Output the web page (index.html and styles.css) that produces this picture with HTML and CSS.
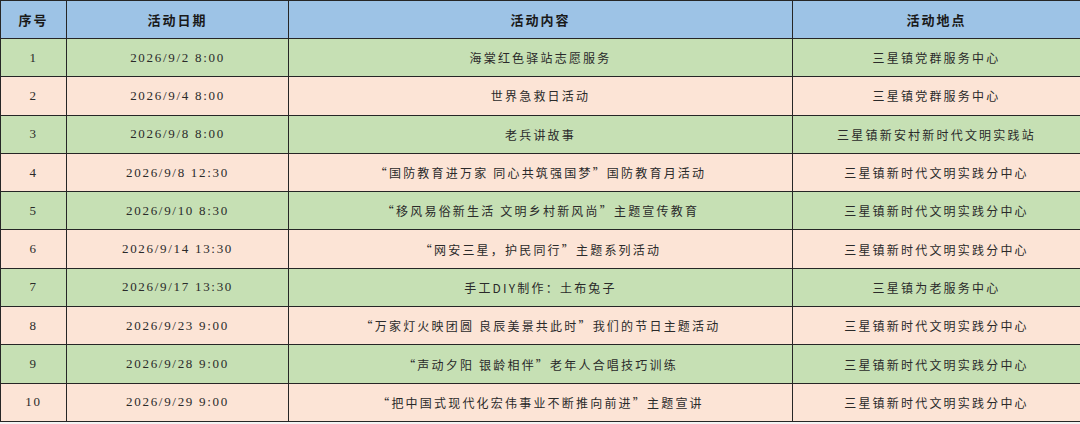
FILE: index.html
```html
<!DOCTYPE html>
<html lang="zh">
<head>
<meta charset="utf-8">
<link rel="stylesheet" href="styles.css">
</head>
<body>
<table class="sched">
  <colgroup>
    <col class="c-no"><col class="c-date"><col class="c-name"><col class="c-place">
  </colgroup>
  <thead>
    <tr class="head"><th>序号</th><th>活动日期</th><th>活动内容</th><th>活动地点</th></tr>
  </thead>
  <tbody>
    <tr class="g"><td class="num">1</td><td class="num">2026/9/2 8:00</td><td>海棠红色驿站志愿服务</td><td>三星镇党群服务中心</td></tr>
    <tr class="p"><td class="num">2</td><td class="num">2026/9/4 8:00</td><td>世界急救日活动</td><td>三星镇党群服务中心</td></tr>
    <tr class="g"><td class="num">3</td><td class="num">2026/9/8 8:00</td><td>老兵讲故事</td><td>三星镇新安村新时代文明实践站</td></tr>
    <tr class="p"><td class="num">4</td><td class="num">2026/9/8 12:30</td><td>“国防教育进万家 同心共筑强国梦”国防教育月活动</td><td>三星镇新时代文明实践分中心</td></tr>
    <tr class="g"><td class="num">5</td><td class="num">2026/9/10 8:30</td><td>“移风易俗新生活 文明乡村新风尚”主题宣传教育</td><td>三星镇新时代文明实践分中心</td></tr>
    <tr class="p"><td class="num">6</td><td class="num">2026/9/14 13:30</td><td>“网安三星，护民同行”主题系列活动</td><td>三星镇新时代文明实践分中心</td></tr>
    <tr class="g"><td class="num">7</td><td class="num">2026/9/17 13:30</td><td>手工DIY制作：土布兔子</td><td>三星镇为老服务中心</td></tr>
    <tr class="p"><td class="num">8</td><td class="num">2026/9/23 9:00</td><td>“万家灯火映团圆 良辰美景共此时”我们的节日主题活动</td><td>三星镇新时代文明实践分中心</td></tr>
    <tr class="g"><td class="num">9</td><td class="num">2026/9/28 9:00</td><td>“声动夕阳 银龄相伴”老年人合唱技巧训练</td><td>三星镇新时代文明实践分中心</td></tr>
    <tr class="p"><td class="num">10</td><td class="num">2026/9/29 9:00</td><td>“把中国式现代化宏伟事业不断推向前进”主题宣讲</td><td>三星镇新时代文明实践分中心</td></tr>
  </tbody>
</table>
</body>
</html>
```
FILE: styles.css
```css
html, body {
  margin: 0;
  padding: 0;
  background: #f3f3f3;
}
body {
  font-family: "Noto Sans CJK SC", "Liberation Serif", sans-serif;
  color: #2a2a2a;
}
.sched {
  width: 1080px;
  height: 422px;
  border-collapse: collapse;
  table-layout: fixed;
}
.c-no { width: 66px; }
.c-date { width: 222px; }
.c-name { width: 504px; }
.c-place { width: 288px; }
.sched th, .sched td {
  border: 1px solid #262626;
  text-align: center;
  vertical-align: middle;
  padding: 0;
  font-size: 12px;
  letter-spacing: 2.2px;
  font-weight: 400;
}
.sched th {
  font-weight: 700;
  font-size: 13px;
  letter-spacing: 2px;
  color: #1a1a1a;
}
.head { height: 38px; background: #9dc3e6; }
.g { background: #c6e0b4; }
.p { background: #fce4d6; }
.sched td.num {
  font-family: "Liberation Serif", serif;
  font-size: 13px;
  letter-spacing: 1.7px;
}
```
